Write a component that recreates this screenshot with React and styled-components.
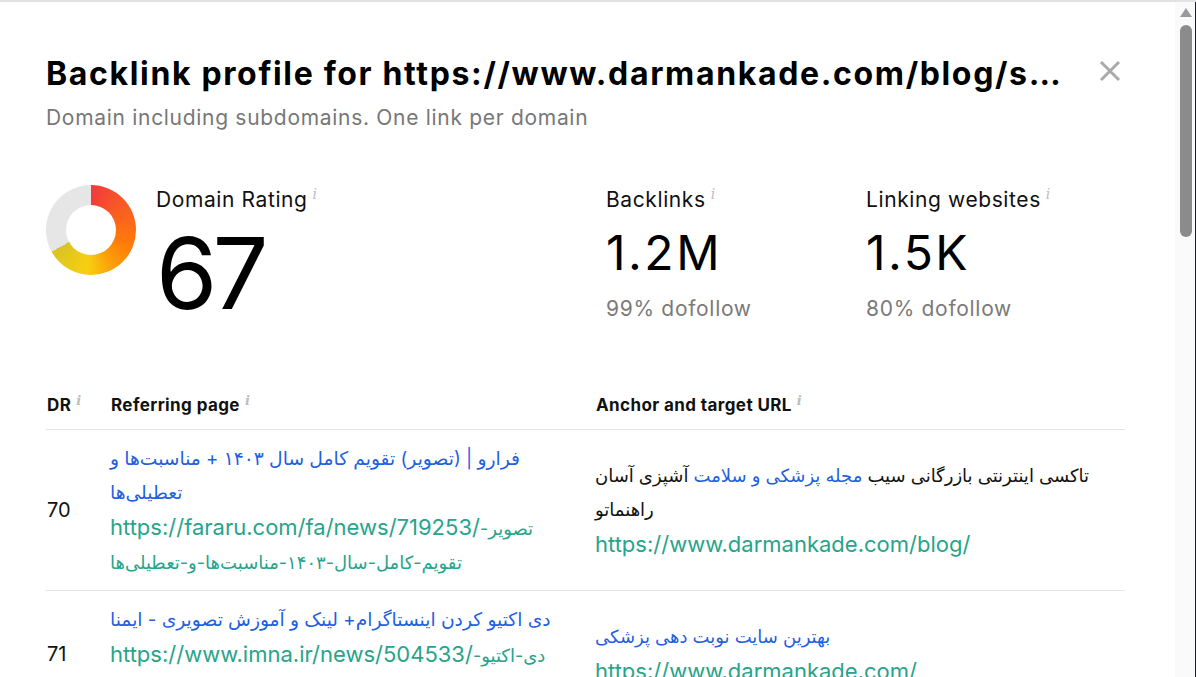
import React from 'react'
import styled, { createGlobalStyle } from 'styled-components'

const GlobalStyle = createGlobalStyle`
  html, body {
    margin: 0;
    padding: 0;
    height: 100%;
    overflow: hidden;
  }
  body {
    font-family: Inter, "DejaVu Sans", sans-serif;
    background: #fff;
    color: #111;
  }
`

const Frame = styled.div`
  height: 100vh;
  box-sizing: border-box;
  border-top: 2px solid #e2e2e2;
  display: flex;
`

const Main = styled.div`
  flex: 1;
  min-width: 0;
  overflow: hidden;
`

// drawn scrollbar (the headless browser hides native ones)
const Rail = styled.div`
  width: 19px;
  flex-shrink: 0;
  background: #fafafa;
  border-right: 1px solid #1e1f2c;
  display: flex;
  flex-direction: column;
  align-items: center;
  padding-left: 1px;
`

const UpArrow = styled.div`
  margin-top: 6px;
  width: 0;
  height: 0;
  border-left: 6px solid transparent;
  border-right: 6px solid transparent;
  border-bottom: 9px solid #9a9a9a;
`

const Thumb = styled.div`
  margin-top: 8px;
  width: 12px;
  height: 212px;
  border-radius: 6px;
  background: #8b8b8b;
`

const Modal = styled.div`
  padding: 52px 50px 48px 46px;
`

const Header = styled.div`
  display: flex;
  align-items: center;
  padding-right: 4px;
`

const Title = styled.h1`
  flex: 1;
  min-width: 0;
  margin: 0;
  font-family: Inter, "DejaVu Sans", sans-serif;
  font-size: 32px;
  font-weight: 700;
  line-height: 40px;
  letter-spacing: 1.65px;
  color: #000;
  white-space: nowrap;
  overflow: hidden;
  text-overflow: ellipsis;
`

const CloseButton = styled.button`
  margin: 0 0 6px 34px;
  width: 22px;
  height: 22px;
  padding: 0;
  border: 0;
  background: none;
  cursor: pointer;
  display: flex;
`

const Subtitle = styled.div`
  margin-top: 10px;
  font-size: 21px;
  line-height: 28px;
  letter-spacing: 0.7px;
  color: #777;
`

const Stats = styled.div`
  display: flex;
  margin-top: 53px;
`

const RatingBlock = styled.div`
  width: 560px;
  display: flex;
  gap: 20px;
`

const Donut = styled.div`
  width: 90px;
  height: 90px;
  border-radius: 50%;
  flex-shrink: 0;
  background: conic-gradient(
    #f23a3c 0deg,
    #f85a26 50deg,
    #ff7a08 110deg,
    #fca00a 150deg,
    #f8cf10 185deg,
    #d8c425 ${p => p.$value * 3.6}deg,
    #e6e6e6 ${p => p.$value * 3.6}deg
  );
  display: flex;
  align-items: center;
  justify-content: center;
  &::after {
    content: '';
    width: 50px;
    height: 50px;
    border-radius: 50%;
    background: #fff;
  }
`

const StatBlock = styled.div`
  width: ${p => p.$width || 'auto'};
  display: flex;
  flex-direction: column;
`

const StatLabel = styled.div`
  font-size: 21px;
  line-height: 26px;
  letter-spacing: 0.6px;
  color: #111;
  margin-top: 2px;
`

const Info = styled.sup`
  font-family: "DejaVu Serif", serif;
  font-style: italic;
  font-size: ${p => p.$size || 14}px;
  color: #bdbdbd;
  margin-left: 5px;
  vertical-align: ${p => p.$raise || 8}px;
  line-height: 0;
  letter-spacing: 0;
`

const BigValue = styled.div`
  font-size: 99px;
  line-height: 99px;
  margin-top: 11px;
  color: #000;
  letter-spacing: -5px;
`

const Value = styled.div`
  font-size: 48px;
  line-height: 48px;
  margin-top: 16px;
  color: #000;
  letter-spacing: 2.5px;
`

const Dofollow = styled.div`
  font-size: 21px;
  line-height: 28px;
  letter-spacing: 0.7px;
  color: #7a7a7a;
  margin-top: 18px;
`

const Table = styled.div`
  margin-top: 58px;
`

const Row = styled.div`
  display: grid;
  grid-template-columns: 64px 485px 1fr;
  align-items: center;
  border-bottom: 1px solid #e4e4e4;
  padding: ${p => (p.$head ? '0' : '12px 0')};
  height: ${p => (p.$head ? '48px' : 'auto')};
`

const HeadCell = styled.div`
  font-size: 17px;
  font-weight: 700;
  letter-spacing: 0.4px;
  color: #111;
  padding-left: 1px;
`

const DrCell = styled.div`
  font-size: 20px;
  color: #111;
  padding-left: 1px;
`

const Cell = styled.div`
  padding-right: 20px;
  font-size: 22px;
  line-height: 34px;
`

const PageTitle = styled.a`
  display: block;
  color: #1f5fe0;
  text-decoration: none;
  font-size: 18.7px;
`

const Url = styled.a`
  display: block;
  color: #27a48a;
  text-decoration: none;
`

const Fa = styled.span`
  font-size: 18px;
  line-height: 1;
`

const Anchor = styled.div`
  color: #111;
  font-size: 18px;
`

const AnchorLink = styled.span`
  color: #1f5fe0;
`

const rows = [
  {
    dr: 70,
    title: 'فرارو | (تصویر) تقویم کامل سال ۱۴۰۳ + مناسبت‌ها و تعطیلی‌ها',
    url: 'https://fararu.com/fa/news/719253/تصویر-تقویم-کامل-سال-۱۴۰۳-مناسبت‌ها-و-تعطیلی‌ها',
    before: 'تاکسی اینترنتی بازرگانی سیب ',
    anchor: 'مجله پزشکی و سلامت',
    after: ' آشپزی آسان راهنماتو',
    target: 'https://www.darmankade.com/blog/',
  },
  {
    dr: 71,
    title: 'دی اکتیو کردن اینستاگرام+ لینک و آموزش تصویری - ایمنا',
    url: 'https://www.imna.ir/news/504533/دی-اکتیو-کردن-اینستاگرام-لینک-آموزش',
    before: '',
    anchor: 'بهترین سایت نوبت دهی پزشکی',
    after: '',
    target: 'https://www.darmankade.com/',
  },
  {
    dr: 68,
    title: 'بهترین دکتر پوست و مو در تهران + آدرس و تلفن - نمناک',
    url: 'https://www.namnak.com/best-dermatologist-tehran.p95421',
    before: '',
    anchor: 'دکتر پوست و مو',
    after: '',
    target: 'https://www.darmankade.com/specialty/dermatologist',
  },
]

// Persian runs inside a url are set a bit smaller than the latin part
const splitUrl = url =>
  url.split(/([\u0600-\u06FF\u200c][\u0600-\u06FF\u200c-]*)/).map((part, i) =>
    i % 2 ? <Fa key={i}>{part}</Fa> : part
  )

const CloseIcon = () => (
  <svg width="22" height="22" viewBox="0 0 22 22">
    <path d="M2 2 L20 20 M20 2 L2 20" stroke="#a9a9a9" strokeWidth="3" fill="none" />
  </svg>
)

const App = () => {
  return (
    <Frame>
      <GlobalStyle />
      <Main>
        <Modal>
          <Header>
            <Title>Backlink profile for https://www.darmankade.com/blog/s...</Title>
            <CloseButton aria-label="Close">
              <CloseIcon />
            </CloseButton>
          </Header>
          <Subtitle>Domain including subdomains. One link per domain</Subtitle>

          <Stats>
            <RatingBlock>
              <Donut $value={67} />
              <StatBlock>
                <StatLabel>
                  Domain Rating<Info>i</Info>
                </StatLabel>
                <BigValue>67</BigValue>
              </StatBlock>
            </RatingBlock>
            <StatBlock $width="260px">
              <StatLabel>
                Backlinks<Info>i</Info>
              </StatLabel>
              <Value>1.2M</Value>
              <Dofollow>99% dofollow</Dofollow>
            </StatBlock>
            <StatBlock>
              <StatLabel>
                Linking websites<Info>i</Info>
              </StatLabel>
              <Value>1.5K</Value>
              <Dofollow>80% dofollow</Dofollow>
            </StatBlock>
          </Stats>

          <Table>
            <Row $head>
              <HeadCell>
                DR<Info $size={13} $raise={6}>i</Info>
              </HeadCell>
              <HeadCell>
                Referring page<Info $size={13} $raise={6}>i</Info>
              </HeadCell>
              <HeadCell>
                Anchor and target URL<Info $size={13} $raise={6}>i</Info>
              </HeadCell>
            </Row>
            {rows.map(row => (
              <Row key={row.url}>
                <DrCell>{row.dr}</DrCell>
                <Cell>
                  <PageTitle href="#">{row.title}</PageTitle>
                  <Url href="#">{splitUrl(row.url)}</Url>
                </Cell>
                <Cell>
                  <Anchor>
                    {row.before}
                    <AnchorLink>{row.anchor}</AnchorLink>
                    {row.after}
                  </Anchor>
                  <Url href="#">{row.target}</Url>
                </Cell>
              </Row>
            ))}
          </Table>
        </Modal>
      </Main>
      <Rail>
        <UpArrow />
        <Thumb />
      </Rail>
    </Frame>
  )
}

export default React.memo(App)
